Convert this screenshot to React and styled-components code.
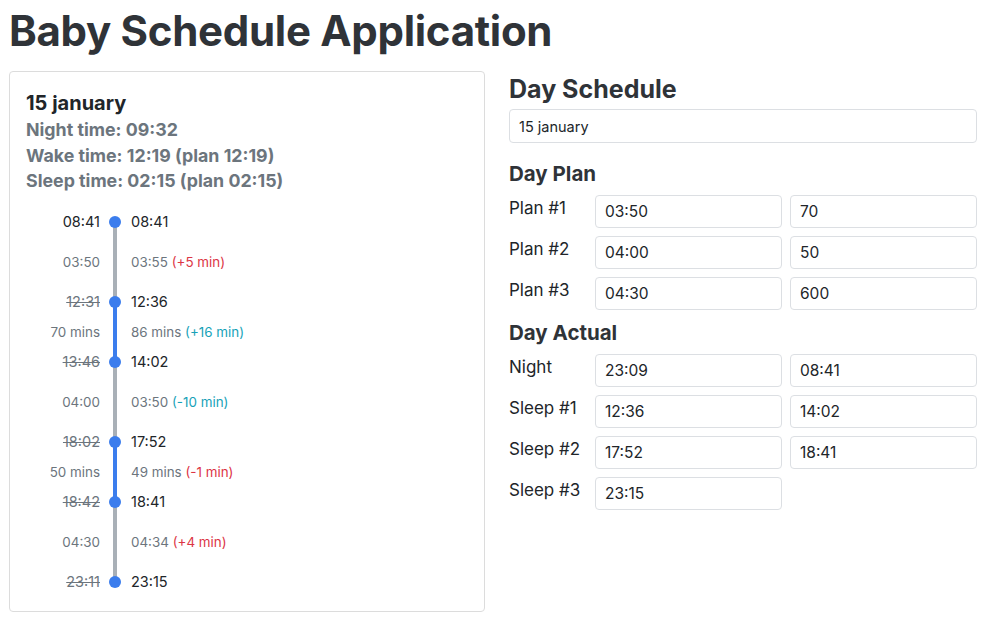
import React from 'react';
import styled, { createGlobalStyle } from 'styled-components';

const GlobalStyle = createGlobalStyle`
    body {
        margin: 0;
        font-family: Inter, "Noto Sans", sans-serif;
        color: #212529;
        background: #fff;
    }
`;

const GRAY = '#a9b0b7';
const BLUE = '#3b7ded';

const timeline = [
    { type: 'point', plan: '08:41', actual: '08:41', struck: false, top: null, bottom: GRAY },
    { type: 'span', kind: 'wake', plan: '03:50', actual: '03:55', diff: '(+5 min)', tone: 'red' },
    { type: 'point', plan: '12:31', actual: '12:36', struck: true, top: GRAY, bottom: BLUE },
    { type: 'span', kind: 'sleep', plan: '70 mins', actual: '86 mins', diff: '(+16 min)', tone: 'teal' },
    { type: 'point', plan: '13:46', actual: '14:02', struck: true, top: BLUE, bottom: GRAY },
    { type: 'span', kind: 'wake', plan: '04:00', actual: '03:50', diff: '(-10 min)', tone: 'teal' },
    { type: 'point', plan: '18:02', actual: '17:52', struck: true, top: GRAY, bottom: BLUE },
    { type: 'span', kind: 'sleep', plan: '50 mins', actual: '49 mins', diff: '(-1 min)', tone: 'red' },
    { type: 'point', plan: '18:42', actual: '18:41', struck: true, top: BLUE, bottom: GRAY },
    { type: 'span', kind: 'wake', plan: '04:30', actual: '04:34', diff: '(+4 min)', tone: 'red' },
    { type: 'point', plan: '23:11', actual: '23:15', struck: true, top: GRAY, bottom: null },
];

const plans = [
    { label: 'Plan #1', a: '03:50', b: '70' },
    { label: 'Plan #2', a: '04:00', b: '50' },
    { label: 'Plan #3', a: '04:30', b: '600' },
];

const actuals = [
    { label: 'Night', a: '23:09', b: '08:41' },
    { label: 'Sleep #1', a: '12:36', b: '14:02' },
    { label: 'Sleep #2', a: '17:52', b: '18:41' },
    { label: 'Sleep #3', a: '23:15', b: null },
];

const App = () => {
    return (
        <>
            <GlobalStyle />
            <Page>
                <Title>Baby Schedule Application</Title>
                <Columns>
                    <Card>
                        <CardTitle>15 january</CardTitle>
                        <Summary>Night time: 09:32</Summary>
                        <Summary>Wake time: 12:19 (plan 12:19)</Summary>
                        <Summary>Sleep time: 02:15 (plan 02:15)</Summary>
                        <Timeline>
                            {timeline.map((item, index) => {
                                if (item.type === 'point') {
                                    return (
                                        <PointRow key={index}>
                                            <PlanTime struck={item.struck}>{item.plan}</PlanTime>
                                            <DotCell top={item.top} bottom={item.bottom}>
                                                <Dot />
                                            </DotCell>
                                            <ActualTime>{item.actual}</ActualTime>
                                        </PointRow>
                                    );
                                }
                                return (
                                    <SpanRow key={index} kind={item.kind}>
                                        <SpanPlan>{item.plan}</SpanPlan>
                                        <LineCell kind={item.kind} />
                                        <SpanActual>
                                            {item.actual} <Diff tone={item.tone}>{item.diff}</Diff>
                                        </SpanActual>
                                    </SpanRow>
                                );
                            })}
                        </Timeline>
                    </Card>
                    <Form>
                        <SectionTitle>Day Schedule</SectionTitle>
                        <DateInput defaultValue="15 january" />
                        <SubTitle>Day Plan</SubTitle>
                        {plans.map((row) => (
                            <FieldRow key={row.label}>
                                <FieldLabel>{row.label}</FieldLabel>
                                <Input defaultValue={row.a} />
                                <Input defaultValue={row.b} />
                            </FieldRow>
                        ))}
                        <SubTitle>Day Actual</SubTitle>
                        {actuals.map((row) => (
                            <FieldRow key={row.label}>
                                <FieldLabel>{row.label}</FieldLabel>
                                <Input defaultValue={row.a} />
                                {row.b !== null && <Input defaultValue={row.b} />}
                            </FieldRow>
                        ))}
                    </Form>
                </Columns>
            </Page>
        </>
    );
};

const Page = styled.div`
    padding: 0 15px 0 9px;
`;

const Title = styled.h1`
    margin: 0;
    padding-top: 3px;
    font-size: 42px;
    line-height: 56px;
    font-weight: 700;
    color: #2f3338;
    letter-spacing: -0.3px;
`;

const Columns = styled.div`
    display: grid;
    grid-template-columns: 476px 468px;
    column-gap: 24px;
    margin-top: 12px;
    align-items: start;
`;

const Card = styled.div`
    border: 1px solid #dcdcdc;
    border-radius: 4px;
    padding: 18px 16px 19px 16px;
`;

const CardTitle = styled.div`
    font-size: 20px;
    line-height: 27px;
    font-weight: 700;
    color: #212529;
`;

const Summary = styled.div`
    font-size: 17.8px;
    line-height: 25.5px;
    font-weight: 700;
    color: #6c757d;
`;

const Timeline = styled.div`
    margin-top: 18px;
`;

const RowBase = styled.div`
    display: grid;
    grid-template-columns: 74px 30px 1fr;
    column-gap: 0;
    align-items: center;
    font-size: 14.5px;
`;

const PointRow = styled(RowBase)`
    height: 20px;
`;

const SpanRow = styled(RowBase)`
    height: ${(p) => (p.kind === 'sleep' ? 40 : 60)}px;
`;

const PlanTime = styled.span`
    text-align: right;
    color: ${(p) => (p.struck ? '#6c757d' : '#212529')};
    text-decoration: ${(p) => (p.struck ? 'line-through' : 'none')};
`;

const ActualTime = styled.span`
    padding-left: 1px;
    color: #212529;
`;

const DotCell = styled.div`
    position: relative;
    height: 100%;
    display: flex;
    align-items: center;
    justify-content: center;
    &::before,
    &::after {
        content: '';
        position: absolute;
        left: 13px;
        width: 4px;
        height: 50%;
    }
    &::before {
        top: 0;
        background: ${(p) => p.top || 'transparent'};
    }
    &::after {
        bottom: 0;
        background: ${(p) => p.bottom || 'transparent'};
    }
`;

const Dot = styled.span`
    position: relative;
    z-index: 1;
    width: 12px;
    height: 12px;
    border-radius: 50%;
    background: ${BLUE};
`;

const LineCell = styled.div`
    justify-self: center;
    width: 4px;
    height: 100%;
    background: ${(p) => (p.kind === 'sleep' ? BLUE : GRAY)};
`;

const SpanPlan = styled.span`
    text-align: right;
    color: #6c757d;
    font-size: 13.4px;
`;

const SpanActual = styled.span`
    padding-left: 1px;
    color: #6c757d;
    font-size: 13.4px;
`;

const Diff = styled.span`
    color: ${(p) => (p.tone === 'red' ? '#dc3545' : '#17a2b8')};
`;

const Form = styled.div`
    display: flex;
    flex-direction: column;
`;

const SectionTitle = styled.h2`
    margin: 0;
    padding-top: 2px;
    font-size: 25px;
    line-height: 32px;
    font-weight: 700;
    color: #2f3338;
`;

const SubTitle = styled.h3`
    margin: 0;
    padding-top: 10px;
    font-size: 20.5px;
    line-height: 26px;
    font-weight: 700;
    color: #2f3338;
`;

const inputStyles = `
    box-sizing: border-box;
    height: 33px;
    border: 1px solid #dcdfe3;
    border-radius: 4px;
    padding: 0 9px;
    font-family: Inter, "Noto Sans", sans-serif;
    color: #212529;
    background: #fff;
    outline: none;
`;

const DateInput = styled.input`
    ${inputStyles}
    margin-top: 4px;
    margin-bottom: 8px;
    width: 100%;
    height: 34px;
    font-size: 14.5px;
`;

const FieldRow = styled.div`
    display: grid;
    grid-template-columns: 78px 187px 187px;
    column-gap: 8px;
    margin-top: 8px;
    align-items: start;
`;

const FieldLabel = styled.div`
    font-size: 17px;
    line-height: 26px;
    color: #212529;
`;

const Input = styled.input`
    ${inputStyles}
    width: 100%;
    font-size: 15.5px;
`;

export default App;
